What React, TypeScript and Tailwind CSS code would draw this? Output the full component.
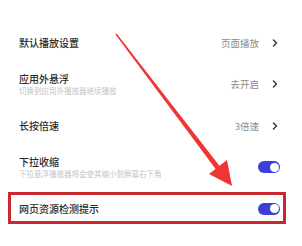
import React from 'react';

const font = { fontFamily: '"Noto Sans CJK SC", "Noto Sans", sans-serif' };

function Chevron() {
  return (
    <svg width="6" height="8" viewBox="0 0 6 8" className="ml-[13px]">
      <path d="M1.5 1 L4.5 4 L1.5 7" fill="none" stroke="#3a3a3a" strokeWidth="1.5" strokeLinecap="round" strokeLinejoin="round" />
    </svg>
  );
}

function Toggle() {
  return (
    <div className="w-[22px] h-[12px] rounded-full bg-[#3b3fd8] flex items-center justify-end pr-[1.5px]">
      <div className="w-[9px] h-[9px] rounded-full bg-white" />
    </div>
  );
}

type Row = {
  title: string;
  sub?: string;
  value?: string;
  toggle?: boolean;
};

const rows: Row[] = [
  { title: '默认播放设置', value: '页面播放' },
  { title: '应用外悬浮', sub: '切换到应用外播放器继续播放', value: '去开启' },
  { title: '长按倍速', value: '3倍速' },
  { title: '下拉收缩', sub: '下拉悬浮播放器将会使其缩小到屏幕右下角', toggle: true },
  { title: '网页资源检测提示', toggle: true },
];

export default function App() {
  return (
    <div className="relative w-[302px] h-[246px] bg-white overflow-hidden" style={font}>
      <div className="pt-[22px] pl-[19px] pr-[22px]">
        {rows.map((r) => (
          <div key={r.title} className="h-[41.5px] flex items-center justify-between">
            <div className="flex flex-col">
              <span className="text-[10px] leading-[12px] font-medium text-[#2a2a2a]">{r.title}</span>
              {r.sub && (
                <span className="text-[7.5px] leading-[10px] mt-[1px] text-[#c4c4c4] whitespace-nowrap">{r.sub}</span>
              )}
            </div>
            {r.toggle ? (
              <Toggle />
            ) : (
              <div className="flex items-center pr-[2px]">
                <span className="text-[9.5px] text-[#8a8a8a]">{r.value}</span>
                <Chevron />
              </div>
            )}
          </div>
        ))}
      </div>

      {/* annotation box */}
      <div className="absolute left-[8px] top-[192px] w-[278px] h-[32px] border-[3px] border-[#c9282e]" />

      {/* annotation arrow */}
      <svg className="absolute inset-0" width="302" height="246" viewBox="0 0 302 246">
        <polygon points="116.6,33.6 220,166.5 216,169.5 115.4,34.4" fill="#ef3535" />
        <polygon points="232,186 209,174 227,160" fill="#ef3535" />
      </svg>
    </div>
  );
}
